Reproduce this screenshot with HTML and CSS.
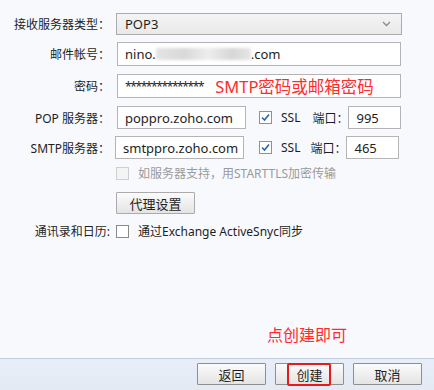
FILE: index.html
```html
<!DOCTYPE html>
<html lang="zh-CN">
<head>
    <meta charset="UTF-8" />
    <title>账户设置</title>
    <link rel="stylesheet" href="styles.css">
</head>
<body>

    <!-- Account form -->
    <div class="form">
        <div class="row row-type">
            <div class="lbl">接收服务器类型：</div>
            <div class="select">
                <span>POP3</span>
                <svg class="chevron" width="9" height="6" viewBox="0 0 9 6"><polyline points="1,1 4.5,4.5 8,1" fill="none" stroke="#8a8a8a" stroke-width="1.3"/></svg>
            </div>
        </div>

        <div class="row row-mail">
            <div class="lbl">邮件帐号：</div>
            <div class="field wide">nino.<span class="blur"></span>.com</div>
        </div>

        <div class="row row-pass">
            <div class="lbl">密码：</div>
            <div class="field wide">
                <span class="mask">***************</span>
                <span class="note">SMTP密码或邮箱密码</span>
            </div>
        </div>

        <div class="row row-pop">
            <div class="lbl">POP 服务器：</div>
            <div class="field host">poppro.zoho.com</div>
            <span class="check on"><svg width="11" height="11" viewBox="0 0 11 11"><polyline points="2,5.5 4.5,8 9,2.5" fill="none" stroke="#2d63ad" stroke-width="1.6"/></svg></span>
            <span class="ssl">SSL</span>
            <span class="port-lbl">端口：</span>
            <div class="field port">995</div>
        </div>

        <div class="row row-smtp">
            <div class="lbl">SMTP服务器：</div>
            <div class="field host">smtppro.zoho.com</div>
            <span class="check on"><svg width="11" height="11" viewBox="0 0 11 11"><polyline points="2,5.5 4.5,8 9,2.5" fill="none" stroke="#2d63ad" stroke-width="1.6"/></svg></span>
            <span class="ssl">SSL</span>
            <span class="port-lbl">端口：</span>
            <div class="field port">465</div>
        </div>

        <div class="row row-tls">
            <div class="lbl"></div>
            <span class="check disabled"></span>
            <span class="muted">如服务器支持，用STARTTLS加密传输</span>
        </div>

        <div class="row row-proxy">
            <div class="lbl"></div>
            <button class="btn proxy">代理设置</button>
        </div>

        <div class="row row-sync">
            <div class="lbl">通讯录和日历:</div>
            <span class="check"></span>
            <span class="sync-text">通过Exchange ActiveSnyc同步</span>
        </div>
    </div>

    <div class="hint">点创建即可</div>

    <!-- Bottom bar -->
    <div class="footer">
        <button class="btn">返回</button>
        <button class="btn marked">创建</button>
        <button class="btn">取消</button>
    </div>

</body>
</html>
```

FILE: styles.css
```css
body {
    margin: 0;
    width: 434px;
    height: 390px;
    background-color: #f8f9fd;
    font-family: "Noto Sans", "Noto Sans CJK SC", sans-serif;
    font-size: 12px;
    color: #1e1e1e;
    display: flex;
    flex-direction: column;
    overflow: hidden;
}

.form {
    padding-top: 13px;
}

.row {
    display: flex;
    align-items: center;
    margin-top: 7px;
}

.row-type { margin-top: 0; height: 22px; }
.row-mail { height: 24px; }
.row-pass { margin-top: 8px; height: 24px; }
.row-pop { margin-top: 8px; height: 23px; }
.row-smtp { height: 23px; }
.row-tls { margin-top: 6px; height: 16px; }
.row-proxy { margin-top: 11px; height: 22px; }
.row-sync { margin-top: 9px; height: 16px; }

.lbl {
    width: 110px;
    margin-right: 6px;
    text-align: right;
    white-space: nowrap;
    flex-shrink: 0;
}

/* Select box */
.select {
    width: 268px;
    height: 20px;
    border: 1px solid #acacac;
    background: linear-gradient(#f4f4f4, #e9e9e9);
    display: flex;
    align-items: center;
    justify-content: space-between;
    padding: 0 8px;
    font-size: 13px;
}

.chevron {
    margin-right: 2px;
}

/* Text fields */
.field {
    height: 100%;
    box-sizing: border-box;
    border: 1px solid #b4b4b4;
    background-color: #fff;
    display: flex;
    align-items: center;
    padding-left: 7px;
    font-size: 13px;
    white-space: nowrap;
}

.wide {
    width: 284px;
    margin-left: 1px;
}

.blur {
    display: inline-block;
    width: 95px;
    height: 12px;
    background: linear-gradient(90deg, #e4e4e4, #d8d8d8 30%, #ededed 55%, #d6d6d6 80%, #e6e6e6);
    filter: blur(1.5px);
}

.mask {
    font-size: 12px;
    letter-spacing: -1.4px;
}

.note {
    margin-left: 12px;
    color: #ff2b2b;
    font-size: 16.5px;
}

.host {
    width: 129px;
    margin-left: 1px;
}

.row-smtp .host {
    margin-left: -1px;
}

.port {
    width: 53px;
}

/* Checkboxes */
.check {
    width: 13px;
    height: 13px;
    box-sizing: border-box;
    border: 1px solid #8a8a8a;
    background-color: #fff;
    display: inline-flex;
    align-items: center;
    justify-content: center;
    flex-shrink: 0;
}

.check.on {
    border-color: #7397c4;
    margin-left: 13px;
}

.row-smtp .check.on {
    margin-left: 15px;
}

.check.disabled {
    border-color: #cfcfcf;
    background-color: #f4f4f4;
}

.ssl {
    margin-left: 9px;
}

.port-lbl {
    margin-left: 12px;
    margin-right: 0;
}

.row-smtp .port-lbl {
    margin-left: 10px;
}

.muted {
    margin-left: 9px;
    color: #9a9a9a;
}

.sync-text {
    margin-left: 9px;
}

/* Buttons */
.btn {
    width: 69px;
    height: 22px;
    border: 1px solid #8f8f8f;
    border-radius: 1px;
    background: linear-gradient(#fbfbfb, #e4e4e4);
    font-family: "Noto Sans", "Noto Sans CJK SC", sans-serif;
    font-size: 13px;
    color: #1e1e1e;
    padding: 0;
    position: relative;
}

.proxy {
    width: 79px;
    border-color: #ababab;
}

.hint {
    margin-top: auto;
    padding-left: 267px;
    color: #ff2b2b;
    font-size: 16px;
    line-height: 22px;
    margin-bottom: 12px;
}

.footer {
    height: 32px;
    box-sizing: border-box;
    border-top: 1px solid #c3cedd;
    background: linear-gradient(#e8eef7, #e3eaf4);
    display: flex;
    justify-content: flex-end;
    gap: 9px;
    padding: 4px 12px 0 0;
}

/* red annotation box round the create button */
.marked::after {
    content: "";
    position: absolute;
    left: 11px;
    top: -1px;
    width: 44px;
    height: 23px;
    border: 2px solid #e8191a;
    border-radius: 2px;
    box-sizing: border-box;
}
```
